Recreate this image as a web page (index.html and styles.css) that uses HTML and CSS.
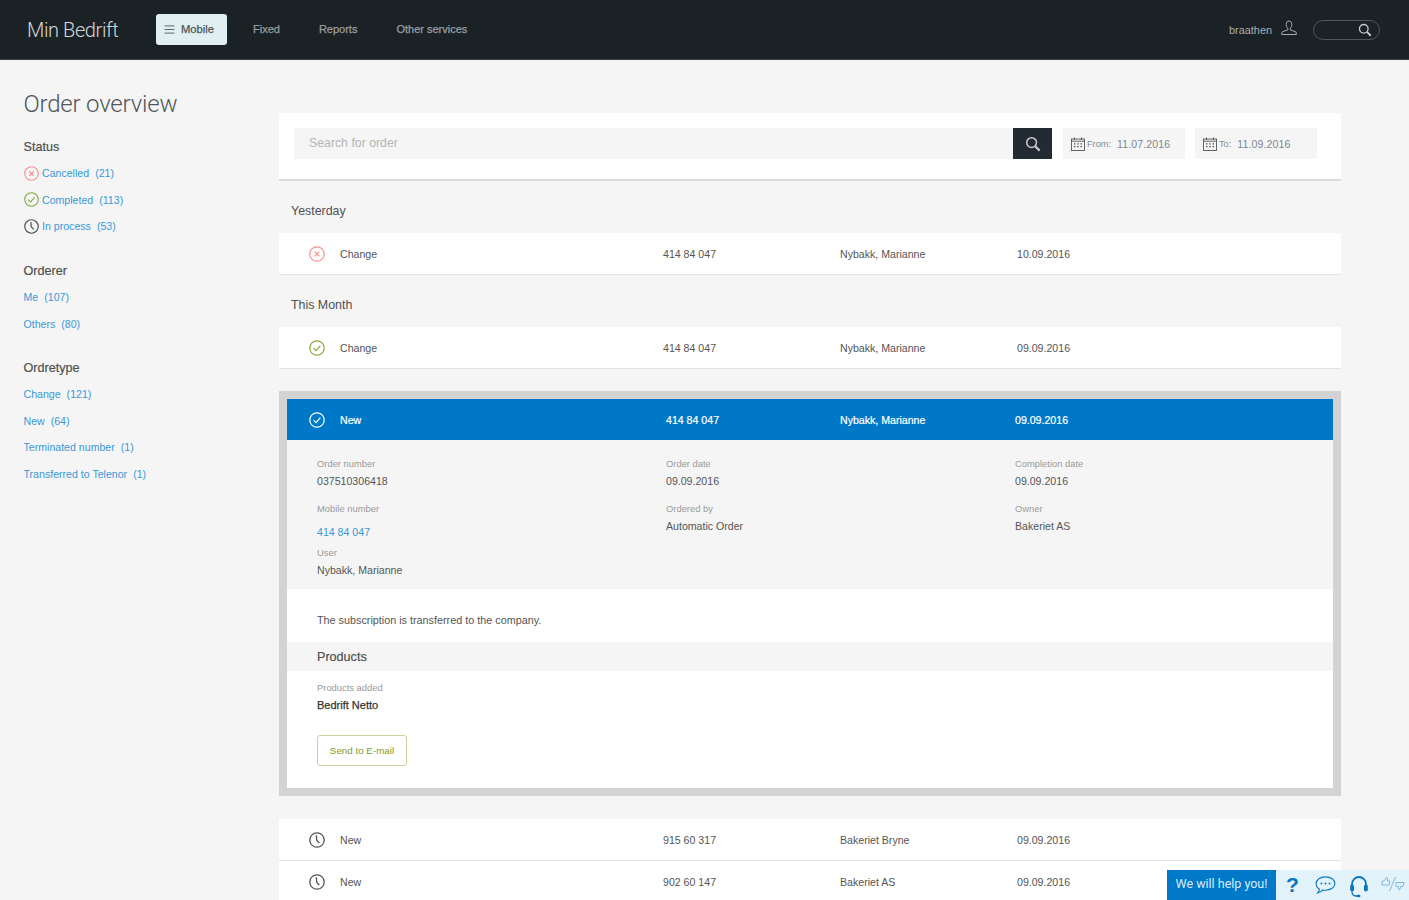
FILE: index.html
```html
<!DOCTYPE html>
<html lang="en">
<head>
<meta charset="utf-8">
<title>Order overview</title>
<link rel="stylesheet" href="styles.css">
</head>
<body>
<svg class="defs" width="0" height="0" aria-hidden="true">
  <symbol id="i-x" viewBox="0 0 16 16"><circle cx="8" cy="8" r="7.2" fill="none" stroke="currentColor" stroke-width="1.200"/><path d="M5.600 5.600l4.800 4.800M10.400 5.600l-4.800 4.800" fill="none" stroke="currentColor" stroke-width="1.200"/></symbol>
  <symbol id="i-check" viewBox="0 0 16 16"><circle cx="8" cy="8" r="7.2" fill="none" stroke="currentColor" stroke-width="1.200"/><path d="M4.600 8.200l2.400 2.400 4.400-5" fill="none" stroke="currentColor" stroke-width="1.200"/></symbol>
  <symbol id="i-clock" viewBox="0 0 16 16"><circle cx="8" cy="8" r="7.2" fill="none" stroke="currentColor" stroke-width="1.300"/><path d="M7.400 3.200l.3 5 2.600 2.800" fill="none" stroke="currentColor" stroke-width="1.300"/></symbol>
  <symbol id="i-search" viewBox="0 0 16 16"><circle cx="6.600" cy="6.600" r="4.900" fill="none" stroke="currentColor" stroke-width="1.500"/><path d="M10.200 10.200l4.400 4.400" fill="none" stroke="currentColor" stroke-width="2.200"/></symbol>
  <symbol id="i-cal" viewBox="0 0 14 14"><rect x=".5" y="2" width="13" height="11.500" fill="none" stroke="currentColor" stroke-width=".9"/><path d="M3.500 .5v2.500M10.500 .5v2.500M.5 4.200h13" fill="none" stroke="currentColor" stroke-width=".9"/><path d="M3 6.200h1.500v1.200H3zM6.200 6.200h1.500v1.200H6.200zM9.500 6.200H11v1.200H9.500zM3 9h1.500v1.200H3zM6.200 9h1.500v1.200H6.200zM9.500 9H11v1.200H9.500z" fill="currentColor"/></symbol>
</svg>

<header class="topbar">
  <div class="brand">Min Bedrift</div>
  <nav class="nav">
    <a class="nav-item active"><svg class="burger" viewBox="0 0 12 10"><path d="M.5 1h11M.5 5h11M.5 9h11" fill="none" stroke="currentColor" stroke-width="1.100"/></svg>Mobile</a>
    <a class="nav-item nav-fixed">Fixed</a>
    <a class="nav-item nav-reports">Reports</a>
    <a class="nav-item nav-other">Other services</a>
  </nav>
  <div class="user">
    <span>braathen</span>
    <svg class="user-icon" viewBox="0 0 16 16"><path d="M5.200 4.600C5.200 2.400 6.300 1 8 1s2.800 1.400 2.800 3.600c0 1.700-.8 3-1.600 3.600v1.700l5 1.700c.8.300 1.100.8 1.100 1.500v1.400H.7v-1.400c0-.7.300-1.200 1.100-1.500l5-1.700V8.200c-.8-.6-1.600-1.900-1.600-3.600z" fill="none" stroke="currentColor" stroke-width="1"/></svg>
    <div class="top-search"><svg class="top-search-icon"><use href="#i-search"/></svg></div>
  </div>
</header>

<div class="page">
  <aside class="side">
    <h1 class="title">Order overview</h1>
    <section class="filter">
      <h2>Status</h2>
      <a class="flink"><svg class="ic red"><use href="#i-x"/></svg><span>Cancelled</span><span>(21)</span></a>
      <a class="flink"><svg class="ic green"><use href="#i-check"/></svg><span>Completed</span><span>(113)</span></a>
      <a class="flink"><svg class="ic grey"><use href="#i-clock"/></svg><span>In process</span><span>(53)</span></a>
    </section>
    <section class="filter">
      <h2>Orderer</h2>
      <a class="flink"><span>Me</span><span>(107)</span></a>
      <a class="flink"><span>Others</span><span>(80)</span></a>
    </section>
    <section class="filter">
      <h2>Ordretype</h2>
      <a class="flink"><span>Change</span><span>(121)</span></a>
      <a class="flink"><span>New</span><span>(64)</span></a>
      <a class="flink"><span>Terminated number</span><span>(1)</span></a>
      <a class="flink"><span>Transferred to Telenor</span><span>(1)</span></a>
    </section>
  </aside>

  <main class="main">
    <div class="searchbar">
      <div class="search-input">Search for order</div>
      <button class="search-btn"><svg class="search-btn-icon"><use href="#i-search"/></svg></button>
      <div class="date date-from"><svg class="cal"><use href="#i-cal"/></svg><span class="date-label">From:</span><span class="date-value">11.07.2016</span></div>
      <div class="date date-to"><svg class="cal"><use href="#i-cal"/></svg><span class="date-label">To:</span><span class="date-value">11.09.2016</span></div>
    </div>

    <h3 class="group">Yesterday</h3>
    <div class="row">
      <svg class="ic-row red"><use href="#i-x"/></svg>
      <span>Change</span><span class="num">414 84 047</span><span class="name">Nybakk, Marianne</span><span class="num">10.09.2016</span>
    </div>

    <h3 class="group">This Month</h3>
    <div class="row">
      <svg class="ic-row green"><use href="#i-check"/></svg>
      <span>Change</span><span class="num">414 84 047</span><span class="name">Nybakk, Marianne</span><span class="num">09.09.2016</span>
    </div>

    <article class="order">
      <div class="order-head">
        <svg class="ic-row"><use href="#i-check"/></svg>
        <span>New</span><span class="num">414 84 047</span><span class="name">Nybakk, Marianne</span><span class="num">09.09.2016</span>
      </div>
      <div class="details">
        <div class="dcol">
          <div class="field"><label>Order number</label><div class="num">037510306418</div></div>
          <div class="field"><label>Mobile number</label><a class="num link">414 84 047</a></div>
          <div class="field field-user"><label>User</label><div class="name">Nybakk, Marianne</div></div>
        </div>
        <div class="dcol">
          <div class="field"><label>Order date</label><div class="num">09.09.2016</div></div>
          <div class="field"><label>Ordered by</label><div>Automatic Order</div></div>
        </div>
        <div class="dcol">
          <div class="field"><label>Completion date</label><div class="num">09.09.2016</div></div>
          <div class="field"><label>Owner</label><div>Bakeriet AS</div></div>
        </div>
      </div>
      <p class="note">The subscription is transferred to the company.</p>
      <h4 class="products-head">Products</h4>
      <div class="products">
        <label>Products added</label>
        <div class="product">Bedrift Netto</div>
        <button class="send">Send to E-mail</button>
      </div>
    </article>

    <div class="row">
      <svg class="ic-row grey"><use href="#i-clock"/></svg>
      <span>New</span><span class="num">915 60 317</span><span class="name">Bakeriet Bryne</span><span class="num">09.09.2016</span>
    </div>
    <div class="row">
      <svg class="ic-row grey"><use href="#i-clock"/></svg>
      <span>New</span><span class="num">902 60 147</span><span class="name">Bakeriet AS</span><span class="num">09.09.2016</span>
    </div>
  </main>
</div>

<div class="help">
  <div class="help-label">We will help you!</div>
  <div class="help-icons">
    <span class="help-q">?</span>
    <svg class="help-i help-chat" viewBox="0 0 22 20"><path d="M11 1.500c5.500 0 9.800 3 9.800 7s-4.300 7-9.800 7c-1 0-2-.1-2.900-.3C6.800 16.800 5 18 2.800 18.300c1-1 1.700-2.300 1.800-3.900C2.400 13.100 1.200 11 1.200 8.500c0-4 4.300-7 9.800-7z" fill="none" stroke="currentColor" stroke-width="1.200"/><circle cx="6.800" cy="8.500" r="1" fill="currentColor"/><circle cx="11" cy="8.500" r="1" fill="currentColor"/><circle cx="15.200" cy="8.500" r="1" fill="currentColor"/></svg>
    <svg class="help-i help-head" viewBox="0 0 20 24"><path d="M3 13V9.500a7 7 0 0 1 14 0V13" fill="none" stroke="currentColor" stroke-width="1.800"/><rect x="1.200" y="10" width="3.800" height="7" rx="1.800" fill="currentColor"/><rect x="15" y="10" width="3.800" height="7" rx="1.800" fill="currentColor"/><path d="M3 17c0 3 1.500 4.500 4 4.500h2" fill="none" stroke="currentColor" stroke-width="1.300"/><ellipse cx="9.500" cy="21.500" rx="2" ry="1.300" fill="currentColor"/></svg>
    <svg class="help-i help-thumbs" viewBox="0 0 24 16"><path d="M1 5h2l2.500-3.500 1 .5V5h2.500l-1 4H1z" fill="none" stroke="currentColor" stroke-width="1"/><path d="M8.500 15L14.500 1" fill="none" stroke="currentColor" stroke-width="1"/><path d="M15 6.500h8l-1 4h-2L18.500 14 17.500 13.500V10.500H15z" fill="none" stroke="currentColor" stroke-width="1"/></svg>
  </div>
</div>
</body>
</html>
```

FILE: styles.css
```css
* { box-sizing: border-box; }
html, body { margin: 0; height: 100%; overflow: hidden; }
body {
  background: #f5f5f5;
  color: #555;
  font: 10.6px/14px "Liberation Sans", Arial, sans-serif;
}
.defs { display: block; height: 0; }
h1, h2, h3, h4, p { margin: 0; font-weight: normal; }
button { font: inherit; cursor: pointer; }

.topbar {
  display: flex;
  align-items: center;
  height: 60px;
  padding-left: 27px;
  background: #1a2226;
  border-bottom: 1px solid #3a4245;
  color: #a9adaf;
}
.brand {
  width: 129px;
  font: 300 20px/24px Roboto, sans-serif;
  letter-spacing: -.4px;
  color: #d4d6d7;
}
.nav { display: flex; align-items: center; line-height: 12px; }
.nav-item {
  padding-bottom: 1px;
  font-size: 11px;
  -webkit-text-stroke: .25px currentColor;
  color: #9b9fa1;
}
.nav-item.active {
  display: flex;
  align-items: center;
  width: 71px;
  height: 31px;
  padding: 0 0 1px 8px;
  border-radius: 3px;
  background: #e1eff0;
  color: #4c5356;
  font-size: 11.200px;
}
.burger { width: 11px; height: 9px; margin-right: 6px; color: #5f6769; }
.nav-fixed { margin-left: 26px; }
.nav-reports { margin-left: 39px; }
.nav-other { margin-left: 39px; }

.user {
  display: flex;
  align-items: center;
  margin-left: auto;
  margin-right: 29px;
  font-size: 10.900px;
}
.user-icon { width: 16px; height: 16px; margin: -3px 0 0 9px; color: #a9adaf; }
.top-search {
  display: flex;
  align-items: center;
  justify-content: flex-end;
  width: 67px;
  height: 20px;
  margin-left: 16px;
  padding-right: 7px;
  border: 1px solid #50575a;
  border-radius: 10px;
}
.top-search-icon { width: 14px; height: 14px; color: #c8cacb; }

.page { display: flex; }
.side { width: 279px; padding-left: 23.500px; flex: none; }
.title {
  margin-top: 29px;
  font: 300 24px/30px Roboto, sans-serif;
  letter-spacing: -.2px;
  color: #50565a;
}
.filter { margin-top: 20px; }
.filter + .filter { margin-top: 23px; }
.filter h2 {
  margin-bottom: 5px;
  font-size: 12.600px;
  line-height: 16px;
  color: #505050;
  -webkit-text-stroke: .2px currentColor;
}
.flink {
  display: flex;
  align-items: center;
  gap: 6px;
  height: 26.600px;
  color: #3a98d8;
}
.ic { width: 15px; height: 15px; margin-right: -2.500px; flex: none; }
.red { color: #f79090; }
.green { color: #86a83c; }
.grey { color: #555; }

.main { width: 1062px; padding-top: 53px; flex: none; }
.searchbar {
  display: flex;
  align-items: flex-start;
  height: 68px;
  padding: 15px 0 0 15px;
  background: #fff;
  border-bottom: 2px solid #dcdcdc;
}
.search-input {
  width: 719px;
  height: 31px;
  padding-left: 15px;
  background: #f5f5f5;
  color: #b5b5b5;
  font-size: 12.300px;
  line-height: 31px;
}
.search-btn {
  display: flex;
  align-items: center;
  justify-content: center;
  width: 39px;
  height: 31px;
  padding: 0;
  border: 0;
  background: #222a33;
}
.search-btn-icon { width: 16px; height: 16px; color: #c8cbce; }
.date {
  display: flex;
  align-items: center;
  height: 31px;
  padding-left: 8px;
  background: #f5f5f5;
}
.date-from { width: 122px; margin-left: 11px; }
.date-to { width: 122px; margin-left: 10px; }
.cal { width: 14px; height: 14px; margin-right: 2px; color: #555; }
.date-label { color: #8a8a8a; font-size: 9.200px; margin-right: 6px; }
.date-value { color: #7c8794; letter-spacing: .1px; }

.group {
  height: 52px;
  padding: 21.500px 0 0 12px;
  font-size: 12.400px;
  line-height: 16px;
  color: #505050;
}
.row, .order-head {
  display: grid;
  grid-template-columns: 31px 323px 177px 177px 1fr;
  align-items: center;
}
.row {
  height: 42px;
  padding-left: 30px;
  background: #fff;
  border-bottom: 1px solid #e3e3e3;
}
.ic-row { width: 16px; height: 16px; }

.order {
  margin: 22px 0 23px;
  border: 8px solid #d3d3d3;
  background: #fff;
}
.order-head {
  grid-template-columns: 31px 326px 174px 175px 1fr;
  height: 41px;
  padding-left: 22px;
  background: #0078c8;
  color: #fff;
  -webkit-text-stroke: .2px #fff;
}
.details {
  display: grid;
  grid-template-columns: 349px 349px 1fr;
  height: 149px;
  padding: 18px 0 0 30px;
  background: #f5f5f5;
}
label { display: block; color: #9a9a9a; font-size: 9.400px; line-height: 12px; }
.field { margin-bottom: 15px; }
.field label { margin-bottom: 4px; }
.field-user { margin-top: -7px; }
.link { display: block; margin-top: 10px; color: #3a98d8; }
.note { height: 53px; padding: 24px 0 0 30px; font-size: 10.800px; color: #555; }
.products-head {
  height: 29px;
  padding-left: 30px;
  background: #f5f5f5;
  font-size: 12.600px;
  line-height: 30px;
  color: #505050;
  -webkit-text-stroke: .2px currentColor;
}
.products { height: 117px; padding: 11px 0 0 30px; }
.products label { margin-bottom: 4px; }
.product { color: #333; -webkit-text-stroke: .25px currentColor; font-size: 11px; }
.send {
  display: block;
  width: 90px;
  height: 31px;
  margin-top: 23px;
  padding: 0;
  border: 1px solid #c5d6a0;
  border-radius: 3px;
  background: #fff;
  color: #7d9e30;
  font-size: 9.800px;
}

.help {
  position: fixed;
  right: 0;
  bottom: 0;
  display: flex;
  width: 242px;
  height: 30px;
}
.help-label {
  width: 109px;
  background: #0079c9;
  color: #d8ecf8;
  font: 12.500px/28px Roboto, sans-serif;
  text-align: center;
}
.help-icons {
  display: flex;
  align-items: center;
  flex: 1;
  padding-left: 10px;
  background: #e3f3fc;
  color: #0a76bf;
}
.help-q { width: 15px; font: bold 21px/28px "Liberation Sans", sans-serif; }
.help-i { flex: none; }
.help-chat { width: 21px; height: 20px; margin-left: 14px; }
.help-head { width: 20px; height: 25px; margin-left: 13px; margin-top: 3px; }
.help-thumbs { width: 24px; height: 16px; margin-left: 12px; margin-top: -3px; color: #7fb8dc; }
```
